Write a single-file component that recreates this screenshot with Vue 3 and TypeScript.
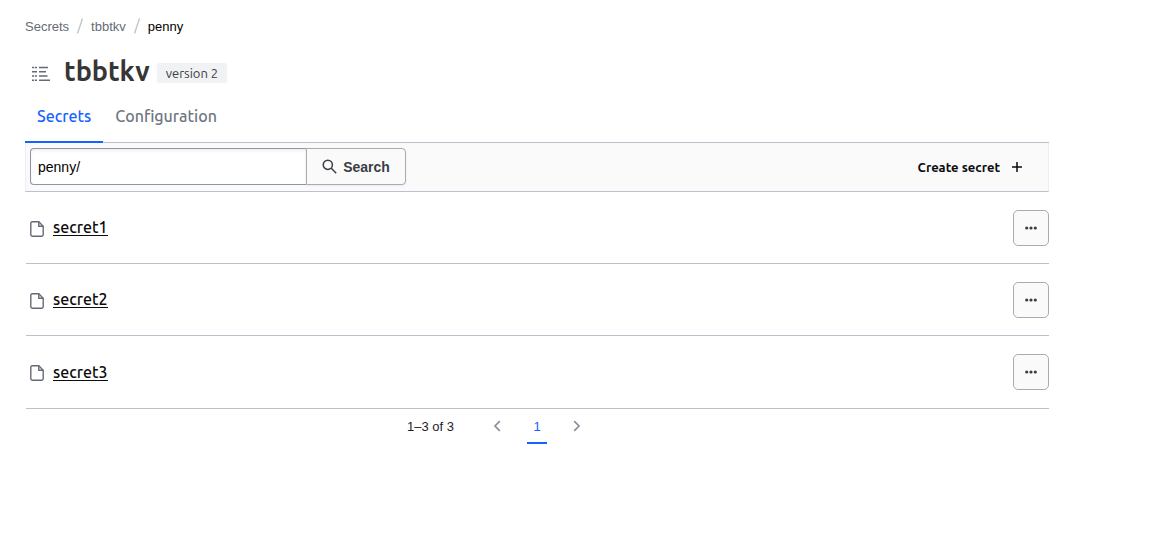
<script setup lang="ts">
import { ref } from 'vue'

const query = ref('penny/')
const secrets: string[] = ['secret1', 'secret2', 'secret3']
</script>

<template>
  <main class="page">
    <nav class="breadcrumb" aria-label="Breadcrumb">
      <a href="#">Secrets</a>
      <svg class="slash" viewBox="0 0 8 18" aria-hidden="true"><path d="M1.5 16.5 6.5 1.5" /></svg>
      <a href="#">tbbtkv</a>
      <svg class="slash" viewBox="0 0 8 18" aria-hidden="true"><path d="M1.5 16.5 6.5 1.5" /></svg>
      <a href="#" class="current" aria-current="page">penny</a>
    </nav>

    <header class="title">
      <svg class="kv" viewBox="0 0 18 16" aria-hidden="true">
        <path d="M0 1.5h2.2M3 1.5h2M7 1.5h9M0 5.7h5M7 5.7h7M0 10h2.2M3 10h2M7 10h8.5M0 14.3h2.2M3 14.3h2M7 14.3h11" />
      </svg>
      <h1>tbbtkv</h1>
      <span class="badge">version 2</span>
    </header>

    <nav class="tabs" aria-label="Engine sections">
      <a href="#" class="active">Secrets</a>
      <a href="#">Configuration</a>
    </nav>

    <div class="toolbar">
      <form class="search" @submit.prevent>
        <input v-model="query" type="text" aria-label="Filter secrets" />
        <button type="submit">
          <svg viewBox="0 0 16 16" aria-hidden="true">
            <circle cx="6.2" cy="6.2" r="4.9" /><path d="m9.7 9.7 5.4 5.4" />
          </svg>
          Search
        </button>
      </form>
      <a href="#" class="create">
        Create secret
        <svg viewBox="0 0 12 12" aria-hidden="true"><path d="M6 1v10M1 6h10" /></svg>
      </a>
    </div>

    <ul class="list">
      <li v-for="name in secrets" :key="name">
        <svg class="file" viewBox="0 0 14 16" aria-hidden="true">
          <path d="M2.2.8h6.6l4.4 4.4v8.6a1.4 1.4 0 0 1-1.4 1.4H2.2a1.4 1.4 0 0 1-1.4-1.4V2.2A1.4 1.4 0 0 1 2.2.8Z" />
          <path d="M8.8.8v4.4h4.4" />
        </svg>
        <a href="#">{{ name }}</a>
        <button type="button" :aria-label="`Actions for ${name}`">
          <svg viewBox="0 0 14 4" aria-hidden="true">
            <circle cx="2.7" cy="2" r="1.6" /><circle cx="7" cy="2" r="1.6" /><circle cx="11.3" cy="2" r="1.6" />
          </svg>
        </button>
      </li>
    </ul>

    <nav class="pagination" aria-label="Pagination">
      <span>1–3 of 3</span>
      <div class="pages">
        <button type="button" aria-label="Previous page">
          <svg viewBox="0 0 8 12" aria-hidden="true"><path d="M6.8 1.2 2 6l4.8 4.8" /></svg>
        </button>
        <a href="#" aria-current="page">1</a>
        <button type="button" aria-label="Next page">
          <svg viewBox="0 0 8 12" aria-hidden="true"><path d="M1.2 1.2 6 6l-4.8 4.8" /></svg>
        </button>
      </div>
    </nav>
  </main>
</template>

<style>
body {
  margin: 0;
  background: #fff;
}
</style>

<style scoped>
.page {
  max-width: 1024px;
  margin: 0 25px;
  padding-top: 15px;
  color: #1f2124;
  font-family: "Liberation Sans", Arial, sans-serif;
  font-size: 13px;
}
svg {
  flex: none;
  fill: none;
  stroke: currentColor;
}
a {
  color: inherit;
  text-decoration: none;
}
button {
  font: inherit;
  cursor: pointer;
}
.breadcrumb {
  display: flex;
  align-items: center;
  gap: 7px;
  height: 22px;
  color: #656a76;
}
.breadcrumb .current {
  color: #000;
}
.slash {
  width: 8px;
  height: 18px;
  stroke: #c2c5cb;
  stroke-width: 1.4;
}
.title {
  display: flex;
  align-items: center;
  height: 48px;
  margin-top: 11px;
  padding-left: 7px;
  font-family: Ubuntu, "Noto Sans", sans-serif;
}
.kv {
  width: 18px;
  height: 16px;
  margin-top: 4px;
  stroke: #656a76;
  stroke-width: 1.5;
}
h1 {
  margin: 0 7px 2px 14px;
  color: #363636;
  font-size: 27px;
  line-height: 36px;
  font-weight: 600;
}
.badge {
  margin-top: 2px;
  padding: 0 9px;
  border-radius: 2px;
  background: #f1f2f3;
  color: #3b3d45;
  font-size: 13px;
  line-height: 20px;
}
.tabs {
  display: flex;
  border-bottom: 1px solid #bac1cc;
  color: #6f7682;
  font-family: Ubuntu, "Noto Sans", sans-serif;
  font-size: 16px;
  font-weight: 500;
  line-height: 24px;
}
.tabs a {
  margin-bottom: -1px;
  padding: 8px 12px 13px;
  border-bottom: 2px solid transparent;
}
.tabs .active {
  border-color: #1563ff;
  color: #1563ff;
}
.toolbar {
  display: flex;
  align-items: center;
  justify-content: space-between;
  padding: 5px 25px 6px 4px;
  border: 1px solid #ebeef2;
  border-top: 0;
  border-bottom-color: #bac1cc;
  background: #fafafa;
}
.search {
  display: flex;
}
.search input {
  box-sizing: border-box;
  width: 276px;
  height: 37px;
  padding: 0 7px;
  border: 1px solid #8e96a3;
  border-right: 0;
  border-radius: 4px 0 0 4px;
  background: #fff;
  box-shadow: inset 0 2px 3px #6568701a;
  color: #000;
  font: 14px "Liberation Sans", Arial, sans-serif;
}
.search button {
  display: flex;
  align-items: center;
  justify-content: center;
  gap: 6px;
  width: 100px;
  padding: 0;
  border: 1px solid #a9abaf;
  border-radius: 0 4px 4px 0;
  background: #fafafa;
  box-shadow: 0 1px 2px #6568701a;
  color: #3b3d45;
  font-size: 14px;
  font-weight: 700;
}
.search svg {
  width: 15px;
  height: 15px;
  stroke-width: 1.6;
}
.create {
  display: flex;
  align-items: center;
  gap: 11px;
  color: #0c0c0e;
  font-family: Ubuntu, "Noto Sans", sans-serif;
  font-size: 13px;
  font-weight: 600;
  line-height: 16px;
}
.create svg {
  width: 12px;
  height: 12px;
  stroke-width: 1.5;
}
.list {
  margin: 0;
  padding: 0;
  list-style: none;
}
.list li {
  display: flex;
  align-items: center;
  height: 71px;
  margin-left: 1px;
  padding-left: 4px;
  border-bottom: 1px solid #bac1cc;
}
.list li:last-child {
  height: 72px;
}
.file {
  width: 14px;
  height: 16px;
  margin-top: 2px;
  stroke: #656a76;
  stroke-width: 1.4;
}
.list a {
  margin: 0 auto 0 9px;
  border-bottom: 1px solid #0c0c0e;
  color: #0c0c0e;
  font-family: Ubuntu, "Noto Sans", sans-serif;
  font-size: 16px;
  font-weight: 500;
  line-height: 16px;
}
.list button {
  display: flex;
  align-items: center;
  justify-content: center;
  width: 36px;
  height: 36px;
  padding: 0;
  border: 1px solid #a9abaf;
  border-radius: 5px;
  background: #fafafa;
  color: #3b3d45;
}
.list button svg {
  width: 14px;
  height: 4px;
  fill: currentColor;
  stroke: none;
}
.pagination {
  display: grid;
  grid-template-columns: 1fr auto 1fr;
  align-items: center;
  height: 35px;
}
.pagination > span {
  justify-self: end;
  margin-right: 33px;
}
.pages {
  display: flex;
  gap: 20px;
}
.pages a {
  box-sizing: border-box;
  width: 20px;
  height: 35px;
  border-bottom: 2px solid #1563ff;
  color: #1563ff;
  line-height: 35px;
  text-align: center;
}
.pages button {
  display: flex;
  align-items: center;
  justify-content: center;
  width: 20px;
  padding: 0 0 2px;
  border: 0;
  background: none;
  color: #8c909c;
}
.pages svg {
  width: 8px;
  height: 12px;
  stroke-width: 1.7;
}
</style>
